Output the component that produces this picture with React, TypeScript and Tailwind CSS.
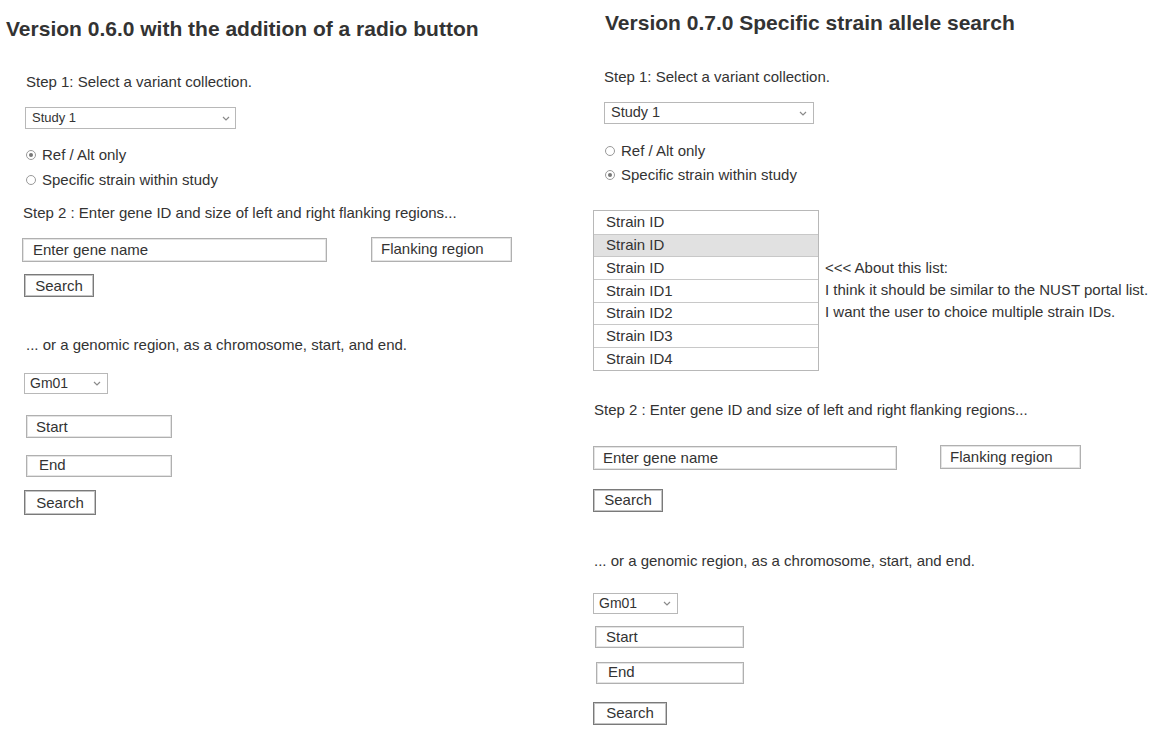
const font = "font-['Liberation_Sans',Arial,sans-serif]";

function Chevron() {
  return (
    <svg width="8" height="5" viewBox="0 0 8 5" className="shrink-0">
      <path d="M1 1l3 3 3-3" fill="none" stroke="#8a8a8a" strokeWidth="1.2" />
    </svg>
  );
}

function Radio({ checked, label }: { checked?: boolean; label: string }) {
  return (
    <div className="flex h-[20px] items-center gap-[6px] text-[15px] leading-[20px]">
      <span className="flex h-[10px] w-[10px] items-center justify-center rounded-full border border-[#999] bg-white">
        {checked && <span className="h-[4px] w-[4px] rounded-full bg-[#777]" />}
      </span>
      {label}
    </div>
  );
}

function Box({ className, text }: { className: string; text: string }) {
  return (
    <div
      className={`flex border border-[#b0b0b0] bg-white text-[15px] leading-[18px] shadow-[inset_0_0_0_1px_#e4e4e4] ${className}`}
    >
      {text}
    </div>
  );
}

function Button({ className }: { className: string }) {
  return (
    <button
      type="button"
      className={`flex items-center justify-center border border-[#7a7a7a] bg-white text-[15px] leading-[18px] text-[#333] shadow-[inset_0_0_0_1px_#c4c4c4] ${className}`}
    >
      Search
    </button>
  );
}

const strains = ["Strain ID", "Strain ID", "Strain ID", "Strain ID1", "Strain ID2", "Strain ID3", "Strain ID4"];

export default function App() {
  return (
    <div className={`flex h-[735px] w-[1156px] overflow-hidden bg-white text-[#333] ${font}`}>
      {/* version 0.6.0 */}
      <div className="flex w-[580px] shrink-0 flex-col items-start">
        <h1 className="ml-[6px] mt-[15px] text-[21px] font-bold leading-[28px] text-[#333]">
          Version 0.6.0 with the addition of a radio button
        </h1>
        <p className="ml-[26px] mt-[29px] text-[15px] leading-[20px]">Step 1: Select a variant collection.</p>
        <div className="ml-[25px] mt-[15px] flex h-[22px] w-[211px] items-center justify-between border border-[#b8b8b8] pl-[6px] pr-[5px] text-[13px]">
          Study 1
          <Chevron />
        </div>
        <div className="ml-[26px] mt-[16px]">
          <Radio checked label="Ref / Alt only" />
        </div>
        <div className="ml-[26px] mt-[5px]">
          <Radio label="Specific strain within study" />
        </div>
        <p className="ml-[23px] mt-[13px] text-[15px] leading-[20px]">
          Step 2 : Enter gene ID and size of left and right flanking regions...
        </p>
        <div className="mt-[14px] flex items-start">
          <Box className="ml-[22px] mt-[1px] h-[24px] w-[305px] items-center pl-[10px]" text="Enter gene name" />
          <Box className="ml-[44px] h-[25px] w-[141px] items-start pl-[9px] pt-[2px]" text="Flanking region" />
        </div>
        <Button className="ml-[24px] mt-[12px] h-[23px] w-[70px]" />
        <p className="ml-[26px] mt-[38px] text-[15px] leading-[20px]">
          ... or a genomic region, as a chromosome, start, and end.
        </p>
        <div className="ml-[24px] mt-[18px] flex h-[21px] w-[84px] items-center justify-between border border-[#b8b8b8] pl-[5px] pr-[6px] text-[14px]">
          Gm01
          <Chevron />
        </div>
        <Box className="ml-[26px] mt-[21px] h-[23px] w-[146px] items-center pl-[9px]" text="Start" />
        <Box className="ml-[26px] mt-[17px] h-[22px] w-[146px] items-start pl-[12px] pt-[0px]" text="End" />
        <Button className="ml-[24px] mt-[13px] h-[25px] w-[72px]" />
      </div>

      {/* version 0.7.0 */}
      <div className="flex flex-1 flex-col items-start">
        <h1 className="ml-[25px] mt-[9px] text-[21px] font-bold leading-[28px] text-[#333]">
          Version 0.7.0 Specific strain allele search
        </h1>
        <p className="ml-[24px] mt-[30px] text-[15px] leading-[20px]">Step 1: Select a variant collection.</p>
        <div className="ml-[24px] mt-[15px] flex h-[22px] w-[210px] items-center justify-between border border-[#b8b8b8] pl-[6px] pr-[6px] text-[14.5px]">
          Study 1
          <Chevron />
        </div>
        <div className="ml-[25px] mt-[17px]">
          <Radio label="Ref / Alt only" />
        </div>
        <div className="ml-[25px] mt-[4px]">
          <Radio checked label="Specific strain within study" />
        </div>
        <div className="mt-[25px] flex items-start">
          <div className="ml-[13px] flex w-[226px] flex-col border border-[#b8b8b8]">
            {strains.map((s, i) => (
              <div
                key={i}
                className={`flex h-[22.7px] items-center border-[#c8c8c8] pl-[12px] text-[15px] ${
                  i > 0 ? "border-t" : ""
                } ${i === 1 ? "bg-[#e1e1e1]" : "bg-white"}`}
              >
                {s}
              </div>
            ))}
          </div>
          <div className="ml-[6px] mt-[47px] text-[15px] leading-[22px]">
            <p>&lt;&lt;&lt; About this list:</p>
            <p>I think it should be similar to the NUST portal list.</p>
            <p>I want the user to choice multiple strain IDs.</p>
          </div>
        </div>
        <p className="ml-[14px] mt-[29px] text-[15px] leading-[20px]">
          Step 2 : Enter gene ID and size of left and right flanking regions...
        </p>
        <div className="mt-[25px] flex items-start">
          <Box className="ml-[13px] mt-[1px] h-[24px] w-[304px] items-center pl-[9px]" text="Enter gene name" />
          <Box className="ml-[43px] h-[24px] w-[141px] items-start pl-[9px] pt-[2px]" text="Flanking region" />
        </div>
        <Button className="ml-[13px] mt-[19px] h-[23px] w-[70px]" />
        <p className="ml-[14px] mt-[39px] text-[15px] leading-[20px]">
          ... or a genomic region, as a chromosome, start, and end.
        </p>
        <div className="ml-[13px] mt-[22px] flex h-[21px] w-[85px] items-center justify-between border border-[#b8b8b8] pl-[5px] pr-[6px] text-[14px]">
          Gm01
          <Chevron />
        </div>
        <Box className="ml-[15px] mt-[12px] h-[22px] w-[149px] items-center pl-[10px]" text="Start" />
        <Box className="ml-[16px] mt-[14px] h-[22px] w-[148px] items-start pl-[11px] pt-[0px]" text="End" />
        <Button className="ml-[13px] mt-[18px] h-[23px] w-[74px]" />
      </div>
    </div>
  );
}
